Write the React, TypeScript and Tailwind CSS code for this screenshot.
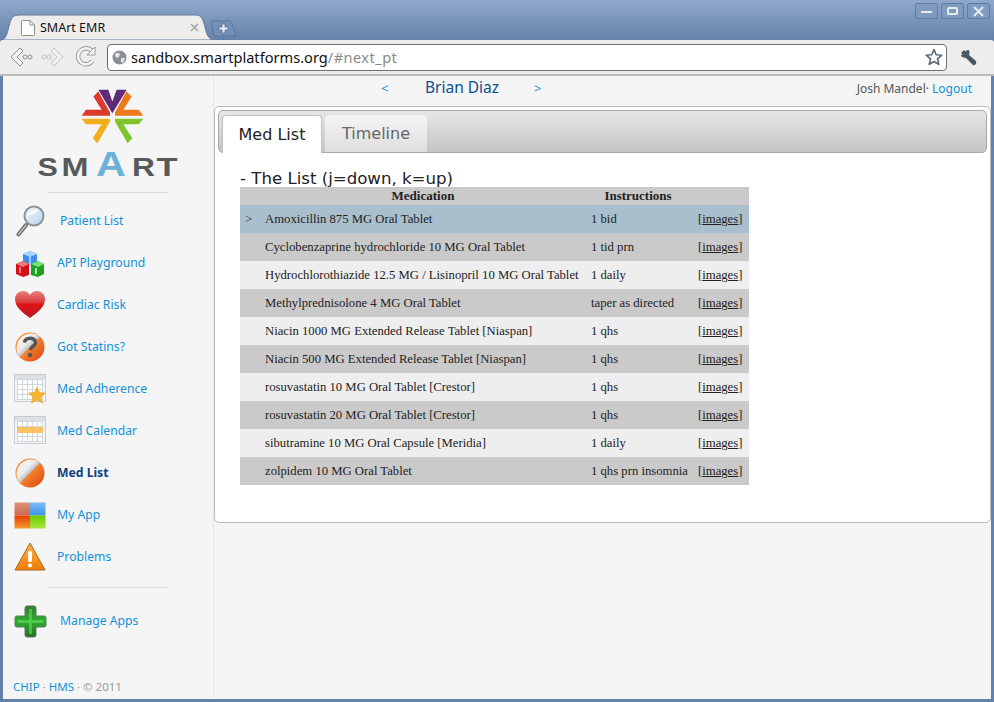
import React from 'react';

const meds = [
  { name: 'Amoxicillin 875 MG Oral Tablet', sig: '1 bid' },
  { name: 'Cyclobenzaprine hydrochloride 10 MG Oral Tablet', sig: '1 tid prn' },
  { name: 'Hydrochlorothiazide 12.5 MG / Lisinopril 10 MG Oral Tablet', sig: '1 daily' },
  { name: 'Methylprednisolone 4 MG Oral Tablet', sig: 'taper as directed' },
  { name: 'Niacin 1000 MG Extended Release Tablet [Niaspan]', sig: '1 qhs' },
  { name: 'Niacin 500 MG Extended Release Tablet [Niaspan]', sig: '1 qhs' },
  { name: 'rosuvastatin 10 MG Oral Tablet [Crestor]', sig: '1 qhs' },
  { name: 'rosuvastatin 20 MG Oral Tablet [Crestor]', sig: '1 qhs' },
  { name: 'sibutramine 10 MG Oral Capsule [Meridia]', sig: '1 daily' },
  { name: 'zolpidem 10 MG Oral Tablet', sig: '1 qhs prn insomnia' },
];

const Magnifier = () => (
  <svg width="30" height="32" viewBox="0 0 30 32">
    <defs>
      <linearGradient id="lens" x1="0" y1="0" x2="1" y2="1">
        <stop offset="0" stopColor="#f4f8fc" />
        <stop offset="1" stopColor="#b9d2ea" />
      </linearGradient>
    </defs>
    <path d="M3.5 29.5 L11 20" stroke="#6a6a6a" strokeWidth="4" strokeLinecap="round" />
    <path d="M3.5 29.5 L11 20" stroke="#c4c4c4" strokeWidth="1.3" strokeLinecap="round" />
    <circle cx="19" cy="11" r="9.5" fill="url(#lens)" stroke="#8d939a" strokeWidth="2" />
    <path d="M11.5 10 Q14 5 24 4.5 Q20 10 11.5 10Z" fill="#fff" opacity="0.8" />
  </svg>
);

const Blocks = () => (
  <svg width="30" height="28" viewBox="0 0 30 28">
    <path d="M8 5 L15 2 L22 5 L22 15 L15 17 L8 15Z" fill="#3d8df0" />
    <path d="M8 5 L15 2 L22 5 L15 8Z" fill="#a8d4ff" />
    <path d="M15 8 V17" stroke="#bfe0ff" strokeWidth="1.5" />
    <path d="M1 15 L8 12 L14 15 V26 L8 28 L1 25Z" fill="#d4101a" />
    <path d="M1 15 L8 12 L14 15 L8 18Z" fill="#ee7a7a" />
    <path d="M5 18 V24" stroke="#f7a8a8" strokeWidth="1.5" />
    <path d="M16 15 L23 12 L29 15 V25 L23 28 L16 26Z" fill="#1ca224" />
    <path d="M16 15 L23 12 L29 15 L23 18Z" fill="#7fe07f" />
    <path d="M21 19 V25" stroke="#e0fae0" strokeWidth="1.5" />
  </svg>
);

const Heart = () => (
  <svg width="32" height="30" viewBox="0 0 32 30">
    <defs>
      <linearGradient id="heart" x1="0" y1="0" x2="0" y2="1">
        <stop offset="0" stopColor="#e88080" />
        <stop offset="0.42" stopColor="#d93a3c" />
        <stop offset="0.48" stopColor="#dd1216" />
        <stop offset="1" stopColor="#b81c20" />
      </linearGradient>
    </defs>
    <path d="M16 28 C8 22 1 17 1 9 C1 4 5 1 9 1 C12 1 14.5 2.5 16 5 C17.5 2.5 20 1 23 1 C27 1 31 4 31 9 C31 17 24 22 16 28Z" fill="url(#heart)" />
  </svg>
);

const Orb = ({ question }: { question?: boolean }) => {
  const grad = question ? 'orbG1' : 'orbG2';
  const orange = question ? 'orbO1' : 'orbO2';
  return (
    <svg width="30" height="30" viewBox="0 0 30 30">
      <defs>
        <linearGradient id={grad} x1="0" y1="0" x2="1" y2="1">
          <stop offset="0" stopColor="#f8f8f8" />
          <stop offset="0.42" stopColor="#ececec" />
          <stop offset="0.72" stopColor="#8c8c8c" />
        </linearGradient>
        <linearGradient id={orange} x1="0" y1="0" x2="1" y2="1">
          <stop offset="0.45" stopColor="#f78a32" />
          <stop offset="1" stopColor="#d8400c" />
        </linearGradient>
      </defs>
      <circle cx="15" cy="15" r="14.5" fill={`url(#${orange})`} />
      <path d="M4.8 25.2 A14.5 14.5 0 0 1 25.2 4.8 Z" fill={`url(#${grad})`} />
      {question && (
        <>
          <path d="M9.5 10.5 C10 5 20 4.5 20.5 10.5 C20.8 14 16 14 15.5 18" fill="none" stroke="#555" strokeWidth="3.6" />
          <circle cx="15" cy="23" r="2.3" fill="#555" />
        </>
      )}
    </svg>
  );
};

const Calendar = ({ star }: { star?: boolean }) => (
  <svg width="33" height="31" viewBox="0 0 33 31">
    <rect x="0.5" y="0.5" width="31" height="27" fill="#f3f5f7" stroke="#c4ccd2" />
    <rect x="1" y="1" width="30" height="4" fill="#dde1e5" />
    <g stroke="#d0d6db" fill="none">
      <rect x="3.5" y="5.5" width="25" height="20" fill="#fff" />
      <path d="M8.5 5.5V25.5M13.5 5.5V25.5M18.5 5.5V25.5M23.5 5.5V25.5M3.5 10.5H28.5M3.5 15.5H28.5M3.5 20.5H28.5" />
    </g>
    {star ? (
      <path d="M23 13 L25.5 18.5 L31.5 19 L27 23 L28.5 29 L23 26 L17.5 29 L19 23 L14.5 19 L20.5 18.5Z" fill="#f7b52c" stroke="#e39a18" strokeWidth="0.5" />
    ) : (
      <rect x="3" y="11" width="26" height="6" fill="#fbc164" />
    )}
  </svg>
);

const Tiles = () => (
  <svg width="32" height="27" viewBox="0 0 32 27">
    <defs>
      <linearGradient id="tileA" x1="0" y1="0" x2="0" y2="1">
        <stop offset="0" stopColor="#e0907a" />
        <stop offset="1" stopColor="#c86a50" />
      </linearGradient>
      <linearGradient id="tileB" x1="0" y1="0" x2="0" y2="1">
        <stop offset="0" stopColor="#7cbcf8" />
        <stop offset="1" stopColor="#3c94ee" />
      </linearGradient>
      <linearGradient id="tileC" x1="0" y1="0" x2="0" y2="1">
        <stop offset="0" stopColor="#e83c02" />
        <stop offset="1" stopColor="#f79a30" />
      </linearGradient>
      <linearGradient id="tileD" x1="0" y1="0" x2="0" y2="1">
        <stop offset="0" stopColor="#6cc800" />
        <stop offset="1" stopColor="#a8e83c" />
      </linearGradient>
    </defs>
    <rect x="0.5" y="0.5" width="15.5" height="13" fill="url(#tileA)" />
    <rect x="16" y="0.5" width="15.5" height="13" fill="url(#tileB)" />
    <rect x="0.5" y="13.5" width="15.5" height="13" fill="url(#tileC)" />
    <rect x="16" y="13.5" width="15.5" height="13" fill="url(#tileD)" />
  </svg>
);

const Warning = () => (
  <svg width="32" height="30" viewBox="0 0 32 30">
    <defs>
      <linearGradient id="warn" x1="0" y1="0" x2="0" y2="1">
        <stop offset="0" stopColor="#fcb14a" />
        <stop offset="1" stopColor="#f07c08" />
      </linearGradient>
    </defs>
    <path d="M16 1 L31 28 H1Z" fill="url(#warn)" stroke="#a8661c" strokeLinejoin="round" />
    <rect x="14" y="9" width="4" height="11" rx="1.5" fill="#fff" />
    <circle cx="16" cy="23.5" r="2" fill="#fff" />
  </svg>
);

const Plus = () => (
  <svg width="33" height="33" viewBox="0 0 33 33">
    <defs>
      <linearGradient id="plus" x1="0" y1="0" x2="0" y2="1">
        <stop offset="0" stopColor="#2e7d32" />
        <stop offset="0.5" stopColor="#2fae2f" />
        <stop offset="1" stopColor="#1e6e22" />
      </linearGradient>
    </defs>
    <path d="M13 1 H20 Q22 1 22 3 V11 H30 Q32 11 32 13 V20 Q32 22 30 22 H22 V30 Q22 32 20 32 H13 Q11 32 11 30 V22 H3 Q1 22 1 20 V13 Q1 11 3 11 H11 V3 Q11 1 13 1Z" fill="url(#plus)" stroke="#5c7a5c" />
    <path d="M15 4 H18 V15 H29 V18 H18 V29 H15 V18 H4 V15 H15Z" fill="#5fd85f" opacity="0.65" />
  </svg>
);

const navItems = [
  { label: 'API Playground', icon: <Blocks /> },
  { label: 'Cardiac Risk', icon: <Heart /> },
  { label: 'Got Statins?', icon: <Orb question /> },
  { label: 'Med Adherence', icon: <Calendar star /> },
  { label: 'Med Calendar', icon: <Calendar /> },
  { label: 'Med List', icon: <Orb />, active: true },
  { label: 'My App', icon: <Tiles /> },
  { label: 'Problems', icon: <Warning /> },
];

// glyphs are stretched one by one, the logo's letters are much wider than any installed font
const logoLetters = [
  { ch: 'S', x: 0.5, sx: 1.15, size: 26.5, fill: '#58595b' },
  { ch: 'M', x: 24.5, sx: 1.22, size: 26.5, fill: '#58595b' },
  { ch: 'A', x: 59, sx: 1.18, size: 35, fill: '#6cb2d8' },
  { ch: 'R', x: 95, sx: 1.2, size: 26.5, fill: '#58595b' },
  { ch: 'T', x: 119.5, sx: 1.3, size: 26.5, fill: '#58595b' },
];

const Logo = () => (
  <div className="flex flex-col items-center">
    <svg width="65" height="57" viewBox="240 25 195 170" className="ml-[8px]">
      <path d="M295 30 H325 L337 65 L350 30 H380 L337 100Z" fill="#5f2a78" />
      <path d="M295 35 L330 98 V108 H245 L258 90 H305 L280 50Z" fill="#dc3a2a" />
      <path d="M379 35 L345 98 V108 H430 L416 90 H370 L395 50Z" fill="#ee7a1e" />
      <path d="M245 117 H330 V125 L292 190 L278 175 L305 133 H258Z" fill="#f2ae1c" />
      <path d="M430 117 H345 V125 L383 190 L397 175 L370 133 H416Z" fill="#7ec42c" />
    </svg>
    <svg width="142" height="28" viewBox="0 0 142 28" className="mt-[6px] overflow-visible">
      {logoLetters.map((l) => (
        <text key={l.ch} transform={`translate(${l.x} 25) scale(${l.sx} 1)`} fontFamily="'Liberation Sans', sans-serif" fontSize={l.size} fontWeight="700" fill={l.fill}>{l.ch}</text>
      ))}
    </svg>
  </div>
);

const Sidebar = () => (
  <aside className="w-[211px] shrink-0 flex flex-col border-r border-[#e8e8e8] font-['Noto_Sans',sans-serif] text-[12.2px] text-[#1291d8]">
    <div className="pt-[12px] h-[116px]">
      <Logo />
    </div>
    <div className="w-[120px] h-px bg-[#dcdcdc] ml-[45px]" />
    <div className="h-[42px] mt-[7px] flex items-center pl-[11px]">
      <span className="w-[32px] flex justify-center"><Magnifier /></span>
      <span className="ml-[14px]">Patient List</span>
    </div>
    {navItems.map((item) => (
      <div key={item.label} className="h-[42px] flex items-center pl-[10px]">
        <span className="w-[34px] flex justify-center">{item.icon}</span>
        <span className={item.active ? 'ml-[10px] font-bold text-[#0f3f80]' : 'ml-[10px]'}>{item.label}</span>
      </div>
    ))}
    <div className="w-[120px] h-px bg-[#dcdcdc] ml-[45px] mt-[9px]" />
    <div className="h-[42px] mt-[12px] flex items-center pl-[10px]">
      <span className="w-[34px] flex justify-center"><Plus /></span>
      <span className="ml-[13px]">Manage Apps</span>
    </div>
    <div className="mt-auto mb-[4px] pl-[10px] text-[11.5px]">
      CHIP<span className="text-[#888]"> · </span>HMS<span className="text-[#999]"> · © 2011</span>
    </div>
  </aside>
);

const MedTable = () => (
  <table className="w-[509px] table-fixed border-collapse font-['Liberation_Serif',serif] text-[12.7px] text-[#222]">
    <colgroup>
      <col className="w-[20px]" />
      <col className="w-[326px]" />
      <col className="w-[107px]" />
      <col className="w-[56px]" />
    </colgroup>
    <thead>
      <tr className="bg-[#cacaca] h-[18px]">
        <th />
        <th className="text-center font-bold text-[13px] p-0 leading-[18px]">Medication</th>
        <th className="text-center font-bold text-[13px] p-0 pr-[3px] leading-[18px]">Instructions</th>
        <th />
      </tr>
    </thead>
    <tbody>
      {meds.map((med, i) => {
        const bg = i === 0 ? 'bg-[#a9bfcd]' : i % 2 === 1 ? 'bg-[#cacaca]' : 'bg-[#eeeeee]';
        return (
          <tr key={med.name} className={`h-[28px] ${bg}`}>
            <td className="p-0 pt-[2px] pl-[5px]">{i === 0 ? '>' : ''}</td>
            <td className="p-0 pt-[2px] pl-[5px] whitespace-nowrap">{med.name}</td>
            <td className="p-0 pt-[2px] pl-[5px] whitespace-nowrap">{med.sig}</td>
            <td className="p-0 pt-[2px] pl-[5px]">[<span className="underline">images</span>]</td>
          </tr>
        );
      })}
    </tbody>
  </table>
);

const Content = () => (
  <main className="flex-1 flex flex-col min-w-0">
    <div className="h-[30px] flex items-center font-['Noto_Sans',sans-serif] relative">
      <span className="absolute left-[167px] top-[3px] text-[13px] text-[#1291d8]">&lt;</span>
      <span className="absolute left-[211px] top-[0px] text-[15.5px] text-[#0f4f90]">Brian Diaz</span>
      <span className="absolute left-[320px] top-[3px] text-[13px] text-[#1291d8]">&gt;</span>
      <span className="ml-auto mr-[19px] mb-[5px] text-[12px] text-[#555]">
        Josh Mandel· <span className="text-[#1291d8]">Logout</span>
      </span>
    </div>
    <section className="h-[417px] bg-white border border-[#bdbdbd] rounded-[5px] p-[3px]">
      <div className="h-[43px] flex items-end gap-[3px] pl-[3px] rounded-[5px] border border-[#a8a8a8] bg-gradient-to-b from-[#e6e6e6] to-[#c4c4c4] font-['DejaVu_Sans',sans-serif] text-[16px]">
        <div className="w-[100px] h-[38px] -mb-px bg-white border border-b-0 border-[#c0c0c0] rounded-t-[4px] flex items-center justify-center text-[#222]">
          Med List
        </div>
        <div className="w-[102px] h-[37px] pt-[1px] bg-gradient-to-b from-[#f5f5f5] to-[#dedede] rounded-t-[4px] flex items-center justify-center text-[#666]">
          Timeline
        </div>
      </div>
      <div className="pl-[22px] pt-[16px]">
        <div className="font-['DejaVu_Sans',sans-serif] text-[16.6px] leading-[19px] text-[#222] h-[18px]">- The List (j=down, k=up)</div>
        <MedTable />
      </div>
    </section>
  </main>
);

const Chrome = () => (
  <>
    <div className="h-[40px] flex relative bg-gradient-to-b from-[#8fa9cb] to-[#6482a9]">
      <div className="absolute left-[0px] bottom-0">
        <svg width="215" height="26" viewBox="0 0 215 26">
          <path d="M0 26 C6 26 7 20 9 12 C11 4 13 1 19 1 H196 C202 1 203 6 205 13 C207 22 209 26 215 26Z" fill="#eeedeb" stroke="#62799c" />
        </svg>
      </div>
      <div className="absolute left-[21px] top-[20px]">
        <svg width="14" height="16" viewBox="0 0 14 16">
          <path d="M0.5 1.5 Q0.5 0.5 1.5 0.5 H9 L13.5 5 V14.5 Q13.5 15.5 12.5 15.5 H1.5 Q0.5 15.5 0.5 14.5Z" fill="#fff" stroke="#8a8a8a" />
          <path d="M9 0.5 V5 H13.5" fill="none" stroke="#8a8a8a" />
        </svg>
      </div>
      <span className="absolute left-[40px] top-[19px] font-['Noto_Sans',sans-serif] text-[12.5px] text-[#111]">SMArt EMR</span>
      <div className="absolute left-[190px] top-[23px]">
        <svg width="9" height="9" viewBox="0 0 9 9"><path d="M1 1 L8 8 M8 1 L1 8" stroke="#a5a5a5" strokeWidth="1.5" /></svg>
      </div>
      <div className="absolute left-[210px] top-[20px]">
        <svg width="27" height="17" viewBox="0 0 27 17">
          <path d="M1 1 H19 Q21 1 22 3 L26 16 H5 Q4 16 3.5 14Z" fill="#7390b6" stroke="#5a769c" />
          <path d="M12 4 H15 V7 H18 V10 H15 V13 H12 V10 H9 V7 H12Z" fill="#dfe7f2" stroke="#4f6a90" strokeWidth="0.7" />
        </svg>
      </div>
      <div className="ml-auto mt-[3px] mr-[4px] flex gap-[3px] h-[16px]">
        <div className="w-[23px] rounded-[2px] border border-[#5d7ba3] bg-[#7f9bc0] flex items-center justify-center">
          <span className="w-[11px] h-[2px] mt-[2px] bg-[#e6ecf4]" />
        </div>
        <div className="w-[23px] rounded-[2px] border border-[#5d7ba3] bg-[#7f9bc0] flex items-center justify-center">
          <span className="w-[11px] h-[8px] rounded-[2px] border-2 border-[#e6ecf4]" />
        </div>
        <div className="w-[23px] rounded-[2px] border border-[#5d7ba3] bg-[#7f9bc0] flex items-center justify-center">
          <svg width="11" height="11" viewBox="0 0 11 11"><path d="M1 1 L10 10 M10 1 L1 10" stroke="#e6ecf4" strokeWidth="2" /></svg>
        </div>
      </div>
    </div>
    <div className="h-[36px] flex items-center bg-[#eeedeb] border-b-2 border-[#bcbcba] rounded-t-[3px] pl-[7px] relative">
      <svg width="96" height="22" viewBox="0 0 96 22" className="shrink-0">
        <path d="M13 2 L4 11 L13 20 L16 17 L10 11 L16 5Z" fill="#f4f4f3" stroke="#8d8d8d" />
        <circle cx="18" cy="11" r="2" fill="none" stroke="#8d8d8d" />
        <circle cx="23" cy="11" r="2" fill="none" stroke="#8d8d8d" />
        <g opacity="0.45">
          <path d="M47 2 L56 11 L47 20 L44 17 L50 11 L44 5Z" fill="#f4f4f3" stroke="#8d8d8d" />
          <circle cx="42" cy="11" r="2" fill="none" stroke="#8d8d8d" />
          <circle cx="37" cy="11" r="2" fill="none" stroke="#8d8d8d" />
        </g>
        <path d="M85 5 A8 8 0 1 0 85.5 15" fill="none" stroke="#9a9a9a" strokeWidth="4.4" />
        <path d="M85 5 A8 8 0 1 0 85.5 15" fill="none" stroke="#f6f6f6" strokeWidth="2.6" />
        <path d="M88 1 V9 H80Z" fill="#f6f6f6" stroke="#9a9a9a" />
      </svg>
      <div className="ml-[4px] w-[840px] h-[27px] rounded-[4px] border border-[#6e6e6e] bg-white flex items-center pl-[4px] pr-[3px] font-['Noto_Sans',sans-serif] text-[14.6px]">
        <svg width="15" height="15" viewBox="0 0 15 15" className="shrink-0">
          <circle cx="7.5" cy="7.5" r="7" fill="#8a8f95" />
          <path d="M3 4 Q6 2 8 4 L7 7 L4 8Z M9 8 L13 8 L11 13 L9 12Z" fill="#e6e8ea" />
        </svg>
        <span className="ml-[4px] pt-[1px] text-[#111]">sandbox.smartplatforms.org</span>
        <span className="pt-[1px] tracking-[0.45px] text-[#8a8a8a]">/#next_pt</span>
        <svg width="18" height="18" viewBox="0 0 18 18" className="ml-auto">
          <path d="M9 1.5 L11.2 6.7 L16.8 7.2 L12.5 10.9 L13.8 16.4 L9 13.5 L4.2 16.4 L5.5 10.9 L1.2 7.2 L6.8 6.7Z" fill="#fff" stroke="#5a6678" strokeWidth="1.6" strokeLinejoin="round" />
        </svg>
      </div>
      <svg width="17" height="17" viewBox="0 0 17 17" className="ml-[13px]">
        <path d="M1 4 L4 1 L6 3 Q5 1 9 1 Q10 4 9 6 L16 12 Q17 14 15 16 Q13 17 12 15 L6 9 Q3 9 1 7 Q1 5 3 6Z" fill="#4c5664" />
      </svg>
    </div>
  </>
);

export default function App() {
  return (
    <div className="w-[994px] h-[702px] overflow-hidden flex flex-col bg-[#6482a9] px-[3px] pb-[3px] relative">
      <div className="-mx-[3px]">
        <Chrome />
      </div>
      <div className="flex-1 flex min-h-0 bg-[#f5f5f5]">
        <Sidebar />
        <Content />
      </div>
    </div>
  );
}
